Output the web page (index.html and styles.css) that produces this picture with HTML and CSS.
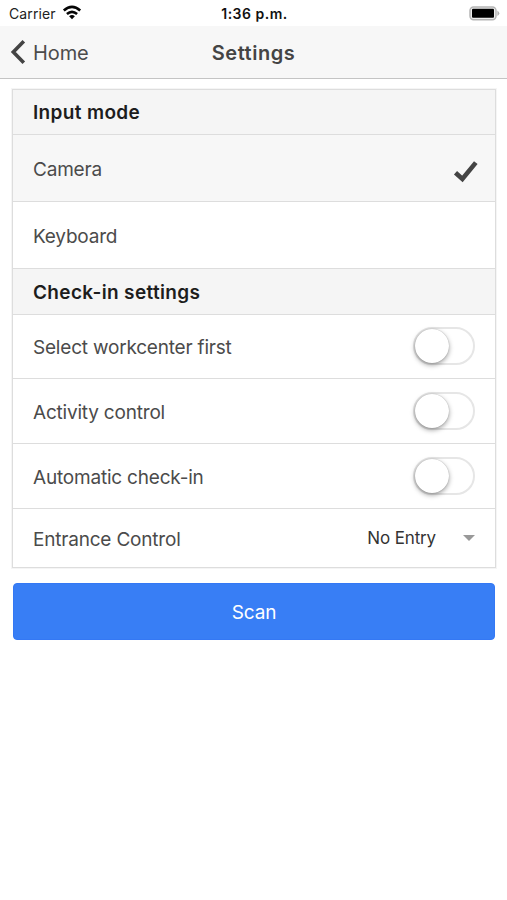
FILE: index.html
```html
<!DOCTYPE html>
<html lang="en">
<head>
<meta charset="utf-8">
<title>Settings</title>
<link rel="stylesheet" href="styles.css">
</head>
<body>
<div class="status">
  <div class="carrier"><span>Carrier</span>
    <svg class="wifi" width="20" height="15" viewBox="0 0 20 15" fill="none" stroke="#050505" stroke-width="2.6"><path d="M1.8 5.5Q10 -1.7 18.2 5.5"/><path d="M4.9 9Q10 4.6 15.1 9"/><path d="M10 14.2L7.1 11.3Q10 8.8 12.9 11.3Z" fill="#050505" stroke="none"/></svg>
  </div>
  <div class="time">1:36 p.m.</div>
  <svg class="battery" width="31" height="15" viewBox="0 0 31 15"><rect x="1" y=".9" width="26" height="12.8" rx="3.6" fill="#eee" stroke="#b5b5b5" stroke-width="1.5"/><rect x="3" y="2.8" width="22" height="9" rx="1" fill="#000"/><path d="M28.4 4.5Q32.2 7.3 28.4 10.1Z" fill="#b0b0b0"/></svg>
</div>
<header class="navbar">
  <a class="back"><svg width="16" height="26" viewBox="0 0 16 26" fill="none" stroke="#444" stroke-width="3.6"><path d="M13.8 2.2L3.3 13L13.8 23.8"/></svg><span>Home</span></a>
  <h1 class="title">Settings</h1>
</header>
<main class="content">
  <div class="list">
    <div class="row divider first"><span>Input mode</span></div>
    <div class="row option selected"><span>Camera</span><svg class="check" width="26" height="24" viewBox="0 0 26 24" fill="none" stroke="#444" stroke-width="4.6"><path d="M2.5 12.7L9.4 19L22.8 2.6"/></svg></div>
    <div class="row option"><span>Keyboard</span></div>
    <div class="row divider"><span>Check-in settings</span></div>
    <div class="row setting"><span>Select workcenter first</span><span class="toggle"><i class="knob"></i></span></div>
    <div class="row setting"><span>Activity control</span><span class="toggle"><i class="knob"></i></span></div>
    <div class="row setting"><span>Automatic check-in</span><span class="toggle"><i class="knob"></i></span></div>
    <div class="row entrance"><span>Entrance Control</span><span class="select"><span>No Entry</span><i class="arrow"></i></span></div>
  </div>
  <button class="scan">Scan</button>
</main>
</body>
</html>
```
FILE: styles.css
```css
* { box-sizing: border-box; }
body {
  margin: 0;
  background: #fff;
  color: #4b4b4b;
  font-family: Inter, "Liberation Sans", sans-serif;
  font-size: 19px;
  line-height: 24px;
}
.status {
  height: 26px;
  display: grid;
  grid-template-columns: 1fr auto 1fr;
  align-items: center;
  padding: 1px 7px 0 9px;
  color: #222;
  font-size: 14px;
}
.carrier { display: flex; align-items: center; gap: 6px; letter-spacing: .1px; }
.wifi { margin-top: -2px; }
.time { font-weight: 600; color: #111; font-size: 14px; letter-spacing: .5px; }
.battery { justify-self: end; margin-top: -1px; }
.navbar {
  height: 53px;
  display: grid;
  grid-template-columns: 1fr auto 1fr;
  align-items: center;
  padding: 0 10px;
  background: #f7f7f7;
  border-bottom: 1px solid #c4c4c4;
}
.back { display: flex; align-items: center; gap: 7px; font-size: 20px; letter-spacing: -.1px; }
.back span { padding-top: 1px; }
.title { margin: 0; padding-top: 1px; font-size: 20px; font-weight: 600; letter-spacing: .5px; color: #444; }
.content { padding: 10px 11px 0 12px; }
.list { border: 1px solid #ddd; outline: 1px solid #f5f5f5; }
.row {
  display: flex;
  align-items: center;
  justify-content: space-between;
  padding: 2px 20px 0;
  border-bottom: 1px solid #ddd;
  letter-spacing: -.2px;
}
.divider { height: 46px; background: #f5f5f5; color: #1d1d1d; font-weight: 600; letter-spacing: .35px; }
.first { height: 45px; }
.option { height: 67px; padding-top: 3px; }
.selected { background: #f7f7f7; }
.check { margin: 4px -4px 0 0; }
.setting { height: 65px; padding-top: 3px; }
.divider + .setting { height: 64px; }
.toggle {
  width: 62px;
  height: 38px;
  border: 2px solid #e6e6e6;
  border-radius: 19px;
  margin-top: -3px;
}
.divider + .setting .toggle { margin-top: -4px; }
.knob {
  display: block;
  width: 34px;
  height: 34px;
  border-radius: 50%;
  background: #fff;
  box-shadow: 0 2px 5px rgba(0,0,0,.38), 0 0 1px rgba(0,0,0,.3);
}
.entrance { height: 58px; border-bottom: 0; padding-top: 3px; }
.select { display: flex; align-items: center; gap: 27px; font-size: 17px; letter-spacing: -.15px; color: #333; margin-top: -4px; }
.arrow { border: solid transparent; border-width: 6px 6px 0; border-top-color: #999; }
.scan {
  display: block;
  width: 482px;
  height: 57px;
  margin: 15px 0 0 1px;
  padding: 2px 0 0;
  border: 1px solid #3478f4;
  border-radius: 4px;
  background: #387ef5;
  color: #fff;
  font: 19px Inter, "Liberation Sans", sans-serif;
  letter-spacing: -.1px;
}
```
